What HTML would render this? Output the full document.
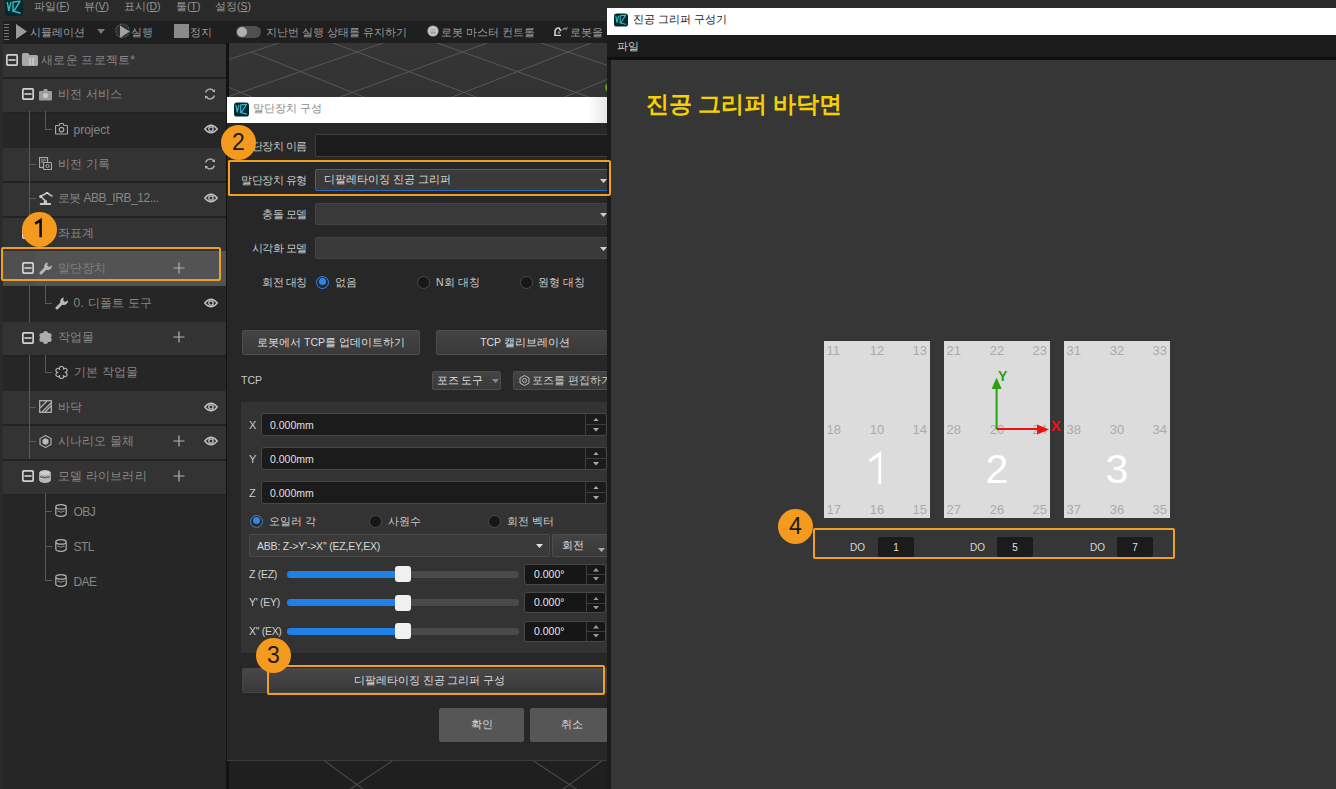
<!DOCTYPE html>
<html><head><meta charset="utf-8">
<style>
*{box-sizing:border-box}
html,body{margin:0;padding:0}
body{width:1336px;height:789px;overflow:hidden;position:relative;background:#2b2b2b;font-family:"Liberation Sans",sans-serif;color:#9a9a9a}
.a{position:absolute}
.t{position:absolute;white-space:nowrap;line-height:1}
.badge{position:absolute;width:35px;height:35px;border-radius:50%;background:#f39a1f;color:#1a1a1a;font-size:23px;text-align:center;line-height:35px}
.obox{position:absolute;border:2px solid #f0a020;border-radius:2px}
</style></head><body>

<!-- ===== MAIN WINDOW ===== -->
<div class="a" id="menubar" style="left:0;top:0;width:1336px;height:21px;background:#2a2a2a"></div>
<div class="a" id="toolbar" style="left:3px;top:21px;width:1333px;height:23px;background:#1f1f1f"></div>


<!-- menubar content -->
<svg class="a" style="left:5px;top:-1px" width="18" height="17" viewBox="0 0 18 17"><rect x="0" y="0" width="18" height="17" rx="3.5" fill="#04292d"/><path d="M2.3 3.4 L3.8 11.5 L5.8 3.6 M8 4 L8 12.3 M8 3 L15 2.3 L9 12 M7.5 12 L15 14" stroke="#33b8c8" stroke-width="1.45" fill="none" stroke-linecap="round" stroke-linejoin="round"/></svg>
<div class="t" style="left:34px;top:1.3px;font-size:10.5px;color:#959595">파일(<u>F</u>)</div>
<div class="t" style="left:84px;top:1.3px;font-size:10.5px;color:#959595">뷰(<u>V</u>)</div>
<div class="t" style="left:124px;top:1.3px;font-size:10.5px;color:#959595">표시(<u>D</u>)</div>
<div class="t" style="left:176px;top:1.3px;font-size:10.5px;color:#959595">툴(<u>T</u>)</div>
<div class="t" style="left:215px;top:1.3px;font-size:10.5px;color:#959595">설정(<u>S</u>)</div>
<!-- toolbar content -->
<div class="a" style="left:4px;top:24px;width:5px;height:17px;background:repeating-linear-gradient(#777 0 1px,transparent 1px 3px)"></div>
<svg class="a" style="left:15px;top:24px" width="13" height="15"><path d="M1 0 L12 7.5 L1 15Z" fill="#9a9a9a"/></svg>
<div class="t" style="left:30px;top:26.6px;font-size:10.7px">시뮬레이션</div>
<svg class="a" style="left:97px;top:29px" width="8" height="5"><path d="M0 0 L8 0 L4 5Z" fill="#777"/></svg>
<svg class="a" style="left:115px;top:23px" width="16" height="16"><circle cx="7.5" cy="7.8" r="6.8" fill="#2e2e2e" stroke="#5a5a5a" stroke-width="1.2" stroke-dasharray="2 1.2"/><path d="M5 2.6 L14.6 8.6 L5 15Z" fill="#a2a2a2"/></svg>
<div class="t" style="left:131px;top:26.6px;font-size:10.7px">실행</div>
<div class="a" style="left:174px;top:24px;width:15px;height:14px;background:#8a8a8a"></div>
<div class="t" style="left:190px;top:26.6px;font-size:10.7px">정지</div>
<div class="a" style="left:236px;top:26px;width:25px;height:12px;border-radius:6px;background:#505050"></div>
<div class="a" style="left:237px;top:27px;width:10px;height:10px;border-radius:5px;background:#b0b0b0"></div>
<div class="t" style="left:266px;top:26.6px;font-size:10.7px">지난번 실행 상태를 유지하기</div>
<svg class="a" style="left:426.5px;top:25px" width="12" height="12"><circle cx="6" cy="6" r="5.6" fill="#b5b5b5"/><circle cx="6" cy="6" r="3.6" fill="none" stroke="#d5d5d5" stroke-width="1"/><path d="M3.5 8 L8.5 8" stroke="#8a8a8a"/></svg>
<div class="t" style="left:441px;top:26.6px;font-size:10.7px">로봇 마스터 컨트롤</div>
<svg class="a" style="left:553px;top:26px" width="15" height="10"><path d="M1 9.5 L8 9.5 M2 9 L2 5 Q3 1.5 6 2 L8 5" stroke="#d0d0d0" stroke-width="1.6" fill="none"/><path d="M9.5 4 L11.5 2 L13 3.5 L14.5 1" stroke="#8a8a8a" stroke-width="1.1" fill="none"/><circle cx="6" cy="6.5" r="1.3" fill="#888"/></svg>
<div class="t" style="left:570px;top:26.6px;font-size:10.7px">로봇을 </div>

<!-- tree panel -->
<div class="a" id="tree" style="left:3px;top:44px;width:223px;height:745px;background:#262626"></div>
<div class="a" style="left:226px;top:43px;width:3px;height:746px;background:#121212"></div>
<div class="a" style="left:3px;top:44.0px;width:223px;height:33.2px;background:#333333"></div>
<div class="a" style="left:3px;top:77.2px;width:223px;height:1.5px;background:#222"></div>
<div class="a" style="left:3px;top:78.7px;width:223px;height:33.2px;background:#333333"></div>
<div class="a" style="left:3px;top:111.9px;width:223px;height:1.5px;background:#222"></div>
<div class="a" style="left:3px;top:148.2px;width:223px;height:33.2px;background:#333333"></div>
<div class="a" style="left:3px;top:181.4px;width:223px;height:1.5px;background:#222"></div>
<div class="a" style="left:3px;top:182.9px;width:223px;height:33.2px;background:#333333"></div>
<div class="a" style="left:3px;top:216.1px;width:223px;height:1.5px;background:#222"></div>
<div class="a" style="left:3px;top:217.6px;width:223px;height:33.2px;background:#333333"></div>
<div class="a" style="left:3px;top:250.8px;width:223px;height:1.5px;background:#222"></div>
<div class="a" style="left:3px;top:250.6px;width:223px;height:35.1px;background:#535353"></div>
<div class="a" style="left:3px;top:250.6px;width:32px;height:35.1px;background:#4f4f4f"></div>
<div class="a" style="left:3px;top:321.8px;width:223px;height:33.2px;background:#333333"></div>
<div class="a" style="left:3px;top:355.0px;width:223px;height:1.5px;background:#222"></div>
<div class="a" style="left:3px;top:391.2px;width:223px;height:33.2px;background:#333333"></div>
<div class="a" style="left:3px;top:424.4px;width:223px;height:1.5px;background:#222"></div>
<div class="a" style="left:3px;top:425.9px;width:223px;height:33.2px;background:#333333"></div>
<div class="a" style="left:3px;top:459.1px;width:223px;height:1.5px;background:#222"></div>
<div class="a" style="left:3px;top:460.6px;width:223px;height:33.2px;background:#333333"></div>
<div class="a" style="left:3px;top:493.8px;width:223px;height:1.5px;background:#222"></div>
<div class="a" style="left:29px;top:111.4px;width:1px;height:36.7px;background:#5a5a5a"></div>
<div class="a" style="left:29px;top:148.2px;width:1px;height:34.7px;background:#5a5a5a"></div>
<div class="a" style="left:29px;top:182.9px;width:1px;height:34.7px;background:#5a5a5a"></div>
<div class="a" style="left:29px;top:285.0px;width:1px;height:36.7px;background:#5a5a5a"></div>
<div class="a" style="left:29px;top:354.5px;width:1px;height:36.7px;background:#5a5a5a"></div>
<div class="a" style="left:29px;top:391.2px;width:1px;height:34.7px;background:#5a5a5a"></div>
<div class="a" style="left:29px;top:425.9px;width:1px;height:33.2px;background:#5a5a5a"></div>
<svg class="a" style="left:6px;top:53.7px" width="12" height="12"><rect x="0.85" y="0.85" width="10.3" height="10.3" rx="0.8" fill="none" stroke="#d2d2d2" stroke-width="1.7"/><rect x="2.4" y="5.2" width="7.2" height="1.6" fill="#d2d2d2"/></svg>
<svg class="a" style="left:22px;top:53.0px" width="16" height="13"><path d="M0 1.5 Q0 0 1.5 0 L6 0 L7.5 2 L14.5 2 Q16 2 16 3.5 L16 11.5 Q16 13 14.5 13 L1.5 13 Q0 13 0 11.5Z" fill="#a8a8a8"/><path d="M8 5 L8 12 M11 5 L11 12" stroke="#e0e0e0" stroke-width="1"/></svg>
<div class="t" style="left:41px;top:53.5px;font-size:12px;letter-spacing:0.25px;color:#878787">새로운 프로젝트*</div>
<svg class="a" style="left:22px;top:88.4px" width="12" height="12"><rect x="0.85" y="0.85" width="10.3" height="10.3" rx="0.8" fill="none" stroke="#d2d2d2" stroke-width="1.7"/><rect x="2.4" y="5.2" width="7.2" height="1.6" fill="#d2d2d2"/></svg>
<svg class="a" style="left:39px;top:87.7px" width="13" height="13"><path d="M1 3 L4 3 L5 1 L8 1 L9 3 L12 3 Q13 3 13 4 L13 11.5 Q13 12.5 12 12.5 L1 12.5 Q0 12.5 0 11.5 L0 4 Q0 3 1 3Z" fill="#9c9c9c"/><circle cx="6.5" cy="7.5" r="2.6" fill="#c8c8c8"/></svg>
<div class="t" style="left:57.5px;top:88.2px;font-size:12px;letter-spacing:0.25px;color:#878787">비전 서비스</div>
<svg class="a" style="left:204px;top:88.2px" width="12" height="12"><path d="M10 3.5 A4.5 4.5 0 0 0 1.6 4.5 M2 8.5 A4.5 4.5 0 0 0 10.4 7.5" fill="none" stroke="#b0b0b0" stroke-width="1.3"/><path d="M8 3.8 L11 4.2 L11 1Z M4 8.2 L1 7.8 L1 11Z" fill="#b0b0b0"/></svg>
<div class="a" style="left:45px;top:111.4px;width:1px;height:17.5px;background:#5a5a5a"></div>
<div class="a" style="left:45px;top:128.9px;width:7px;height:1px;background:#5a5a5a"></div>
<svg class="a" style="left:55px;top:122.4px" width="13" height="13"><path d="M1.5 3.5 L4 3.5 L5 1.5 L8 1.5 L9 3.5 L11.5 3.5 Q12.5 3.5 12.5 4.5 L12.5 11 Q12.5 12 11.5 12 L1.5 12 Q0.5 12 0.5 11 L0.5 4.5 Q0.5 3.5 1.5 3.5Z" fill="none" stroke="#a8a8a8" stroke-width="1.2"/><circle cx="6.5" cy="7.6" r="2.3" fill="none" stroke="#a8a8a8" stroke-width="1.2"/></svg>
<div class="t" style="left:73.5px;top:124.1px;font-size:12px;letter-spacing:0;color:#878787">project</div>
<svg class="a" style="left:204px;top:123.9px" width="14" height="10"><path d="M0.7 5 Q7 -2.5 13.3 5 Q7 12.5 0.7 5Z" fill="none" stroke="#c0c0c0" stroke-width="1.3"/><circle cx="7" cy="5" r="2.2" fill="none" stroke="#c0c0c0" stroke-width="1.3"/></svg>
<div class="a" style="left:29px;top:163.7px;width:7px;height:1px;background:#5a5a5a"></div>
<svg class="a" style="left:39px;top:157.2px" width="13" height="13"><rect x="0.5" y="0.5" width="8" height="10" fill="none" stroke="#aaa" stroke-width="1.2"/><path d="M2 3 L7 3 M2 5 L5 5" stroke="#aaa"/><rect x="4.5" y="5.5" width="8" height="7" rx="1" fill="#2e2e2e" stroke="#aaa" stroke-width="1.2"/><circle cx="8.5" cy="9" r="1.6" fill="none" stroke="#aaa"/></svg>
<div class="t" style="left:57.5px;top:157.7px;font-size:12px;letter-spacing:0.25px;color:#878787">비전 기록</div>
<svg class="a" style="left:204px;top:157.7px" width="12" height="12"><path d="M10 3.5 A4.5 4.5 0 0 0 1.6 4.5 M2 8.5 A4.5 4.5 0 0 0 10.4 7.5" fill="none" stroke="#b0b0b0" stroke-width="1.3"/><path d="M8 3.8 L11 4.2 L11 1Z M4 8.2 L1 7.8 L1 11Z" fill="#b0b0b0"/></svg>
<div class="a" style="left:29px;top:198.4px;width:7px;height:1px;background:#5a5a5a"></div>
<svg class="a" style="left:39px;top:191.9px" width="14" height="14" viewBox="0 0 14 14"><rect x="0.9" y="11" width="11" height="2" fill="#c8c8c8"/><path d="M4.5 11.2 L5 8.3 L7.7 8.3 L8.2 11.2Z" fill="#c8c8c8"/><path d="M6.2 8.6 L1.6 4.5 L8.1 0.8 L12.4 3.9" stroke="#c8c8c8" stroke-width="1.5" fill="none"/><circle cx="1.7" cy="4.5" r="1.5" fill="#d0d0d0"/><circle cx="8.1" cy="0.9" r="1.2" fill="#d0d0d0"/><path d="M11.5 3 L13.5 3.5 L12.5 5.2" stroke="#aaa" stroke-width="1" fill="none"/></svg>
<div class="t" style="left:57.5px;top:192.4px;font-size:12px;letter-spacing:-0.45px;color:#878787">로봇 ABB_IRB_12...</div>
<svg class="a" style="left:204px;top:193.4px" width="14" height="10"><path d="M0.7 5 Q7 -2.5 13.3 5 Q7 12.5 0.7 5Z" fill="none" stroke="#c0c0c0" stroke-width="1.3"/><circle cx="7" cy="5" r="2.2" fill="none" stroke="#c0c0c0" stroke-width="1.3"/></svg>
<svg class="a" style="left:22px;top:227.3px" width="12" height="12"><rect x="0.85" y="0.85" width="10.3" height="10.3" rx="0.8" fill="none" stroke="#d2d2d2" stroke-width="1.7"/><rect x="2.4" y="5.2" width="7.2" height="1.6" fill="#d2d2d2"/></svg>
<svg class="a" style="left:39px;top:226.6px" width="13" height="13"><path d="M2 1 L2 11 L12 11" stroke="#aaa" stroke-width="1.5" fill="none"/></svg>
<div class="t" style="left:57.5px;top:227.1px;font-size:12px;letter-spacing:0.25px;color:#878787">좌표계</div>
<svg class="a" style="left:22px;top:262.0px" width="12" height="12"><rect x="0.85" y="0.85" width="10.3" height="10.3" rx="0.8" fill="none" stroke="#d2d2d2" stroke-width="1.7"/><rect x="2.4" y="5.2" width="7.2" height="1.6" fill="#d2d2d2"/></svg>
<svg class="a" style="left:39px;top:260.8px" width="14" height="14" viewBox="0 0 14 14"><path d="M2 12 L7.2 6.8" stroke="#b8b8b8" stroke-width="3" stroke-linecap="round"/><path d="M6 8 A4.3 4.3 0 0 1 8.6 1.2 L8.3 4.6 L10 5.9 L13 4.3 A4.3 4.3 0 0 1 6 8Z" fill="#b8b8b8"/></svg>
<div class="t" style="left:57.5px;top:261.8px;font-size:12px;letter-spacing:0.25px;color:#808080">말단장치</div>
<svg class="a" style="left:173px;top:261.8px" width="12" height="12"><path d="M6 0.5 L6 11.5 M0.5 6 L11.5 6" stroke="#b0b0b0" stroke-width="1.2"/></svg>
<div class="a" style="left:45px;top:285.0px;width:1px;height:17.5px;background:#5a5a5a"></div>
<div class="a" style="left:45px;top:302.5px;width:7px;height:1px;background:#5a5a5a"></div>
<svg class="a" style="left:55px;top:295.5px" width="14" height="14" viewBox="0 0 14 14"><path d="M2 12 L7.2 6.8" stroke="#b8b8b8" stroke-width="3" stroke-linecap="round"/><path d="M6 8 A4.3 4.3 0 0 1 8.6 1.2 L8.3 4.6 L10 5.9 L13 4.3 A4.3 4.3 0 0 1 6 8Z" fill="#b8b8b8"/></svg>
<div class="t" style="left:73.5px;top:296.5px;font-size:12px;letter-spacing:0.25px;color:#878787">0. 디폴트 도구</div>
<svg class="a" style="left:204px;top:297.5px" width="14" height="10"><path d="M0.7 5 Q7 -2.5 13.3 5 Q7 12.5 0.7 5Z" fill="none" stroke="#c0c0c0" stroke-width="1.3"/><circle cx="7" cy="5" r="2.2" fill="none" stroke="#c0c0c0" stroke-width="1.3"/></svg>
<svg class="a" style="left:22px;top:331.5px" width="12" height="12"><rect x="0.85" y="0.85" width="10.3" height="10.3" rx="0.8" fill="none" stroke="#d2d2d2" stroke-width="1.7"/><rect x="2.4" y="5.2" width="7.2" height="1.6" fill="#d2d2d2"/></svg>
<svg class="a" style="left:39px;top:330.8px" width="13" height="13" viewBox="0 0 13 13"><g fill="#adadad"><circle cx="6.5" cy="6.5" r="4.3"/><circle cx="6.5" cy="2.6" r="2.5"/><circle cx="6.5" cy="10.4" r="2.5"/><circle cx="2.9" cy="4.6" r="2.5"/><circle cx="10.1" cy="4.6" r="2.5"/><circle cx="2.9" cy="8.4" r="2.5"/><circle cx="10.1" cy="8.4" r="2.5"/></g></svg>
<div class="t" style="left:57.5px;top:331.3px;font-size:12px;letter-spacing:0.25px;color:#878787">작업물</div>
<svg class="a" style="left:173px;top:331.3px" width="12" height="12"><path d="M6 0.5 L6 11.5 M0.5 6 L11.5 6" stroke="#b0b0b0" stroke-width="1.2"/></svg>
<div class="a" style="left:45px;top:354.5px;width:1px;height:17.5px;background:#5a5a5a"></div>
<div class="a" style="left:45px;top:372.0px;width:7px;height:1px;background:#5a5a5a"></div>
<svg class="a" style="left:55px;top:365.5px" width="13" height="13" viewBox="0 0 13 13"><path d="M4.85 3.64 A2.05 2.05 0 1 1 8.15 3.64 A2.05 2.05 0 1 1 9.80 6.50 A2.05 2.05 0 1 1 8.15 9.36 A2.05 2.05 0 1 1 4.85 9.36 A2.05 2.05 0 1 1 3.20 6.50 A2.05 2.05 0 1 1 4.85 3.64 Z" fill="none" stroke="#b0b0b0" stroke-width="1.2"/></svg>
<div class="t" style="left:73.5px;top:366.0px;font-size:12px;letter-spacing:0.25px;color:#878787">기본 작업물</div>
<div class="a" style="left:29px;top:406.7px;width:7px;height:1px;background:#5a5a5a"></div>
<svg class="a" style="left:39px;top:400.2px" width="13" height="13"><rect x="0.7" y="0.7" width="11.6" height="11.6" fill="none" stroke="#b0b0b0" stroke-width="1.3"/><path d="M1 8 L8 1 M3 12 L12 3 M6 12 L12 6" stroke="#b0b0b0" stroke-width="1.3"/></svg>
<div class="t" style="left:57.5px;top:400.7px;font-size:12px;letter-spacing:0.25px;color:#878787">바닥</div>
<svg class="a" style="left:204px;top:401.7px" width="14" height="10"><path d="M0.7 5 Q7 -2.5 13.3 5 Q7 12.5 0.7 5Z" fill="none" stroke="#c0c0c0" stroke-width="1.3"/><circle cx="7" cy="5" r="2.2" fill="none" stroke="#c0c0c0" stroke-width="1.3"/></svg>
<div class="a" style="left:29px;top:441.4px;width:7px;height:1px;background:#5a5a5a"></div>
<svg class="a" style="left:39px;top:434.9px" width="13" height="13"><path d="M6.5 0.5 L12 3.5 L12 9.5 L6.5 12.5 L1 9.5 L1 3.5Z" fill="none" stroke="#aaa" stroke-width="1.2"/><path d="M6.5 3 L9.5 4.8 L9.5 8.2 L6.5 10 L3.5 8.2 L3.5 4.8Z" fill="#bbb"/></svg>
<div class="t" style="left:57.5px;top:435.4px;font-size:12px;letter-spacing:0.25px;color:#878787">시나리오 물체</div>
<svg class="a" style="left:173px;top:435.4px" width="12" height="12"><path d="M6 0.5 L6 11.5 M0.5 6 L11.5 6" stroke="#b0b0b0" stroke-width="1.2"/></svg>
<svg class="a" style="left:204px;top:436.4px" width="14" height="10"><path d="M0.7 5 Q7 -2.5 13.3 5 Q7 12.5 0.7 5Z" fill="none" stroke="#c0c0c0" stroke-width="1.3"/><circle cx="7" cy="5" r="2.2" fill="none" stroke="#c0c0c0" stroke-width="1.3"/></svg>
<svg class="a" style="left:22px;top:470.3px" width="12" height="12"><rect x="0.85" y="0.85" width="10.3" height="10.3" rx="0.8" fill="none" stroke="#d2d2d2" stroke-width="1.7"/><rect x="2.4" y="5.2" width="7.2" height="1.6" fill="#d2d2d2"/></svg>
<svg class="a" style="left:39px;top:469.6px" width="12" height="13" viewBox="0 0 12 13"><path d="M0.6 2.8 A5.4 2.3 0 0 1 11.4 2.8 L11.4 10.2 A5.4 2.3 0 0 1 0.6 10.2Z" fill="#b5b5b5" stroke="#c8c8c8" stroke-width="0.8"/><ellipse cx="6" cy="2.8" rx="5" ry="1.9" fill="#d0d0d0"/><path d="M1.2 6.6 Q3 7.8 4.5 7 L6 8 L7.5 7 Q9 7.8 10.8 6.6" stroke="#3a3a3a" stroke-width="1" fill="none"/></svg>
<div class="t" style="left:57.5px;top:470.1px;font-size:12px;letter-spacing:0.25px;color:#878787">모델 라이브러리</div>
<svg class="a" style="left:173px;top:470.1px" width="12" height="12"><path d="M6 0.5 L6 11.5 M0.5 6 L11.5 6" stroke="#b0b0b0" stroke-width="1.2"/></svg>
<div class="a" style="left:45px;top:493.4px;width:1px;height:17.5px;background:#5a5a5a"></div>
<div class="a" style="left:45px;top:510.9px;width:7px;height:1px;background:#5a5a5a"></div>
<svg class="a" style="left:55px;top:504.4px" width="12" height="13" viewBox="0 0 12 13"><path d="M0.8 2.9 A5.2 2.2 0 0 1 11.2 2.9 A5.2 2.2 0 0 1 0.8 2.9 L0.8 10.1 A5.2 2.2 0 0 0 11.2 10.1 L11.2 2.9" fill="none" stroke="#b0b0b0" stroke-width="1.2"/><path d="M2.5 7 L4.5 7.6 L6 8.3 L7.5 7.6 L9.5 7" stroke="#9a9a9a" stroke-width="1" fill="none"/></svg>
<div class="t" style="left:73.5px;top:506.1px;font-size:12px;letter-spacing:-0.6px;color:#878787">OBJ</div>
<div class="a" style="left:45px;top:510.9px;width:1px;height:34.7px;background:#5a5a5a"></div>
<div class="a" style="left:45px;top:545.6px;width:7px;height:1px;background:#5a5a5a"></div>
<svg class="a" style="left:55px;top:539.1px" width="12" height="13" viewBox="0 0 12 13"><path d="M0.8 2.9 A5.2 2.2 0 0 1 11.2 2.9 A5.2 2.2 0 0 1 0.8 2.9 L0.8 10.1 A5.2 2.2 0 0 0 11.2 10.1 L11.2 2.9" fill="none" stroke="#b0b0b0" stroke-width="1.2"/><path d="M2.5 7 L4.5 7.6 L6 8.3 L7.5 7.6 L9.5 7" stroke="#9a9a9a" stroke-width="1" fill="none"/></svg>
<div class="t" style="left:73.5px;top:540.8px;font-size:12px;letter-spacing:-0.6px;color:#878787">STL</div>
<div class="a" style="left:45px;top:545.6px;width:1px;height:34.7px;background:#5a5a5a"></div>
<div class="a" style="left:45px;top:580.3px;width:7px;height:1px;background:#5a5a5a"></div>
<svg class="a" style="left:55px;top:573.8px" width="12" height="13" viewBox="0 0 12 13"><path d="M0.8 2.9 A5.2 2.2 0 0 1 11.2 2.9 A5.2 2.2 0 0 1 0.8 2.9 L0.8 10.1 A5.2 2.2 0 0 0 11.2 10.1 L11.2 2.9" fill="none" stroke="#b0b0b0" stroke-width="1.2"/><path d="M2.5 7 L4.5 7.6 L6 8.3 L7.5 7.6 L9.5 7" stroke="#9a9a9a" stroke-width="1" fill="none"/></svg>
<div class="t" style="left:73.5px;top:575.5px;font-size:12px;letter-spacing:-0.6px;color:#878787">DAE</div>
<div class="obox" style="left:1px;top:246.8px;width:220px;height:34.1px"></div>
<div class="badge" style="left:22px;top:212px"><svg class="a" style="left:0;top:0" width="35" height="35"><path d="M13.2 11.6 L18.6 8.2 L18.6 25.2" stroke="#111" stroke-width="2.6" fill="none" stroke-linejoin="miter"/></svg></div>
<!-- viewport -->
<div class="a" id="viewport" style="left:229px;top:43px;width:378px;height:746px;background:linear-gradient(#353535,#323232 8%,#262626 55%,#1f1f1f 95%)"></div>
<svg class="a" style="left:229px;top:43px" width="378" height="746"><g stroke="#575757" stroke-width="1"><line x1="-339.0" y1="-13.0" x2="-175.4" y2="67.0"/><line x1="-115.3" y1="-13.0" x2="-381.6" y2="67.0"/><line x1="-236.8" y1="-13.0" x2="-61.2" y2="67.0"/><line x1="-13.1" y1="-13.0" x2="-267.3" y2="67.0"/><line x1="-134.6" y1="-13.0" x2="53.1" y2="67.0"/><line x1="89.1" y1="-13.0" x2="-153.1" y2="67.0"/><line x1="22.5" y1="9.0" x2="167.4" y2="67.0"/><line x1="191.3" y1="-13.0" x2="-38.8" y2="67.0"/><line x1="69.7" y1="-13.0" x2="281.6" y2="67.0"/><line x1="293.5" y1="-13.0" x2="75.4" y2="67.0"/><line x1="171.9" y1="-13.0" x2="395.9" y2="67.0"/><line x1="395.6" y1="-13.0" x2="189.7" y2="67.0"/><line x1="274.1" y1="-13.0" x2="510.1" y2="67.0"/><line x1="497.8" y1="-13.0" x2="304.0" y2="67.0"/><line x1="376.3" y1="-13.0" x2="624.4" y2="67.0"/><line x1="600.0" y1="-13.0" x2="418.2" y2="67.0"/><line x1="478.4" y1="-13.0" x2="738.6" y2="67.0"/><line x1="702.2" y1="-13.0" x2="532.5" y2="67.0"/></g><g stroke="#4a4a4a" stroke-width="1.1"><line x1="66.9" y1="697" x2="149.1" y2="757"/><line x1="194.5" y1="697" x2="104.9" y2="757"/><line x1="272.6" y1="697" x2="364.0" y2="757"/><line x1="401.5" y1="697" x2="319.3" y2="757"/></g><circle cx="381" cy="44.5" r="5" fill="#6a9a20"/></svg>
<!-- dialog -->
<div class="a" style="left:227px;top:97px;width:380px;height:664px;background:#272727;border-bottom:1px solid #3c3c3c"></div>
<div class="a" style="left:227px;top:97px;width:380px;height:26px;background:linear-gradient(90deg,#fff 95%,#e6e6e6)"></div>
<svg class="a" style="left:234px;top:102px" width="15" height="15" viewBox="0 0 18 17"><rect x="0" y="0" width="18" height="17" rx="3.5" fill="#04292d"/><path d="M2.3 3.4 L3.8 11.5 L5.8 3.6 M8 4 L8 12.3 M8 3 L15 2.3 L9 12 M7.5 12 L15 14" stroke="#33b8c8" stroke-width="1.45" fill="none" stroke-linecap="round" stroke-linejoin="round"/></svg>
<div class="t" style="left:253px;top:103px;font-size:10.5px;color:#8a8a8a">말단장치 구성</div>
<div class="t" style="right:1029px;top:140.7px;font-size:10.5px;color:#c8c8c8;letter-spacing:-0.45px">말단장치 이름</div>
<div class="a" style="left:315px;top:134px;width:300px;height:23px;background:#1b1b1b;border:1px solid #3e3e3e;border-radius:2px"></div>
<div class="t" style="right:1029px;top:174.7px;font-size:10.5px;color:#c8c8c8;letter-spacing:-0.45px">말단장치 유형</div>
<div class="a" style="left:315px;top:169px;width:300px;height:22px;background:#3a3a3a;border:1px solid #2b66b8;border-radius:2px"></div>
<div class="t" style="left:324px;top:174px;font-size:10.5px;color:#c8c8c8;color:#d8d8d8">디팔레타이징 진공 그리퍼</div>
<svg class="a" style="left:599.5px;top:178.5px" width="7" height="4"><path d="M0 0 L7 0 L3.5 4Z" fill="#d0d0d0"/></svg>
<div class="t" style="right:1029px;top:208.7px;font-size:10.5px;color:#c8c8c8;letter-spacing:-0.45px">충돌 모델</div>
<div class="a" style="left:315px;top:203px;width:300px;height:22px;background:#393939;border:1px solid #444;border-radius:2px"></div>
<svg class="a" style="left:599.5px;top:212.5px" width="7" height="4"><path d="M0 0 L7 0 L3.5 4Z" fill="#d0d0d0"/></svg>
<div class="t" style="right:1029px;top:242.7px;font-size:10.5px;color:#c8c8c8;letter-spacing:-0.45px">시각화 모델</div>
<div class="a" style="left:315px;top:237px;width:300px;height:22px;background:#393939;border:1px solid #444;border-radius:2px"></div>
<svg class="a" style="left:599.5px;top:246.5px" width="7" height="4"><path d="M0 0 L7 0 L3.5 4Z" fill="#d0d0d0"/></svg>
<div class="t" style="right:1029px;top:276.7px;font-size:10.5px;color:#c8c8c8;letter-spacing:-0.45px">회전 대칭</div>
<div class="a" style="left:316px;top:275.5px;width:13px;height:13px;border-radius:50%;border:1.5px solid #2f86e8;background:#2a2a2a"><div class="a" style="left:1.5px;top:1.5px;width:7px;height:7px;border-radius:50%;background:#2f86e8"></div></div>
<div class="t" style="left:335px;top:276.7px;font-size:10.5px;color:#c8c8c8">없음</div>
<div class="a" style="left:417px;top:275.5px;width:13px;height:13px;border-radius:50%;border:1px solid #4a4a4a;background:#171717"></div>
<div class="t" style="left:436px;top:276.7px;font-size:10.5px;color:#c8c8c8">N회 대칭</div>
<div class="a" style="left:520px;top:275.5px;width:13px;height:13px;border-radius:50%;border:1px solid #4a4a4a;background:#171717"></div>
<div class="t" style="left:538px;top:276.7px;font-size:10.5px;color:#c8c8c8">원형 대칭</div>
<div class="a" style="left:242px;top:330px;width:178px;height:25px;background:linear-gradient(#434343,#393939);border:1px solid #4d4d4d;border-radius:2px"></div>
<div class="t" style="left:181.0px;width:300px;text-align:center;top:336.5px;font-size:10.5px;color:#dedede">로봇에서 TCP를 업데이트하기</div>
<div class="a" style="left:436px;top:330px;width:180px;height:25px;background:linear-gradient(#434343,#393939);border:1px solid #4d4d4d;border-radius:2px"></div>
<div class="t" style="left:375.0px;width:300px;text-align:center;top:336.5px;font-size:10.5px;color:#dedede">TCP 캘리브레이션</div>
<div class="t" style="left:241px;top:375px;font-size:10.5px;color:#c8c8c8">TCP</div>
<div class="a" style="left:432px;top:371px;width:69px;height:19px;background:linear-gradient(#434343,#393939);border:1px solid #4d4d4d;border-radius:2px"></div>
<div class="t" style="left:310.0px;width:300px;text-align:center;top:374.5px;font-size:10.5px;color:#dedede">포즈 도구</div>
<svg class="a" style="left:491.5px;top:378.5px" width="7" height="4"><path d="M0 0 L7 0 L3.5 4Z" fill="#888"/></svg>
<div class="a" style="left:513px;top:371px;width:100px;height:19px;background:linear-gradient(#434343,#393939);border:1px solid #4d4d4d;border-radius:2px"></div>
<svg class="a" style="left:519px;top:375px" width="11" height="11"><path d="M5.5 0.5 L10 3 L10 8 L5.5 10.5 L1 8 L1 3Z" fill="none" stroke="#bbb" stroke-width="1"/><circle cx="5.5" cy="5.5" r="2" fill="none" stroke="#bbb"/></svg>
<div class="t" style="left:532px;top:375px;font-size:10.5px;color:#c8c8c8">포즈를 편집하기</div>
<div class="a" style="left:241px;top:402px;width:370px;height:251px;background:#333333"></div>
<div class="t" style="left:249px;top:419.5px;font-size:11px;color:#c8c8c8">X</div>
<div class="a" style="left:261px;top:413px;width:346px;height:23px;background:#1b1b1b;border:1px solid #474747;border-radius:3px"></div>
<div class="a" style="left:585px;top:414px;width:1px;height:21px;background:#3c3c3c"></div>
<div class="a" style="left:586px;top:424px;width:21px;height:1px;background:#3c3c3c"></div>
<svg class="a" style="left:592.5px;top:417.5px" width="6" height="3.5"><path d="M0 3.5 L6 3.5 L3 0Z" fill="#aaa"/></svg>
<svg class="a" style="left:592.5px;top:428px" width="6" height="3.5"><path d="M0 0 L6 0 L3 3.5Z" fill="#aaa"/></svg>
<div class="t" style="left:270px;top:420px;font-size:10.5px;color:#e0e0e0">0.000mm</div>
<div class="t" style="left:249px;top:453.5px;font-size:11px;color:#c8c8c8">Y</div>
<div class="a" style="left:261px;top:447px;width:346px;height:23px;background:#1b1b1b;border:1px solid #474747;border-radius:3px"></div>
<div class="a" style="left:585px;top:448px;width:1px;height:21px;background:#3c3c3c"></div>
<div class="a" style="left:586px;top:458px;width:21px;height:1px;background:#3c3c3c"></div>
<svg class="a" style="left:592.5px;top:451.5px" width="6" height="3.5"><path d="M0 3.5 L6 3.5 L3 0Z" fill="#aaa"/></svg>
<svg class="a" style="left:592.5px;top:462px" width="6" height="3.5"><path d="M0 0 L6 0 L3 3.5Z" fill="#aaa"/></svg>
<div class="t" style="left:270px;top:454px;font-size:10.5px;color:#e0e0e0">0.000mm</div>
<div class="t" style="left:249px;top:487.5px;font-size:11px;color:#c8c8c8">Z</div>
<div class="a" style="left:261px;top:481px;width:346px;height:23px;background:#1b1b1b;border:1px solid #474747;border-radius:3px"></div>
<div class="a" style="left:585px;top:482px;width:1px;height:21px;background:#3c3c3c"></div>
<div class="a" style="left:586px;top:492px;width:21px;height:1px;background:#3c3c3c"></div>
<svg class="a" style="left:592.5px;top:485.5px" width="6" height="3.5"><path d="M0 3.5 L6 3.5 L3 0Z" fill="#aaa"/></svg>
<svg class="a" style="left:592.5px;top:496px" width="6" height="3.5"><path d="M0 0 L6 0 L3 3.5Z" fill="#aaa"/></svg>
<div class="t" style="left:270px;top:488px;font-size:10.5px;color:#e0e0e0">0.000mm</div>
<div class="a" style="left:250px;top:514.5px;width:13px;height:13px;border-radius:50%;border:1.5px solid #2f86e8;background:#2a2a2a"><div class="a" style="left:1.5px;top:1.5px;width:7px;height:7px;border-radius:50%;background:#2f86e8"></div></div>
<div class="t" style="left:269px;top:515.7px;font-size:10.5px;color:#c8c8c8">오일러 각</div>
<div class="a" style="left:369px;top:514.5px;width:13px;height:13px;border-radius:50%;border:1px solid #4a4a4a;background:#171717"></div>
<div class="t" style="left:388px;top:515.7px;font-size:10.5px;color:#c8c8c8">사원수</div>
<div class="a" style="left:488px;top:514.5px;width:13px;height:13px;border-radius:50%;border:1px solid #4a4a4a;background:#171717"></div>
<div class="t" style="left:507px;top:515.7px;font-size:10.5px;color:#c8c8c8">회전 벡터</div>
<div class="a" style="left:249px;top:534px;width:301px;height:23px;background:#3a3a3a;border:1px solid #4a4a4a;border-radius:2px"></div>
<div class="t" style="left:257px;top:540.8px;font-size:10.5px;color:#d8d8d8;letter-spacing:-0.2px">ABB: Z-&gt;Y'-&gt;X'' (EZ,EY,EX)</div>
<svg class="a" style="left:535.5px;top:543.5px" width="7" height="4"><path d="M0 0 L7 0 L3.5 4Z" fill="#e0e0e0"/></svg>
<div class="a" style="left:552px;top:534px;width:60px;height:23px;background:linear-gradient(#434343,#393939);border:1px solid #4d4d4d;border-radius:2px"></div>
<div class="t" style="left:423.0px;width:300px;text-align:center;top:539.5px;font-size:10.5px;color:#dedede">회전</div>
<svg class="a" style="left:597.5px;top:547.5px" width="7" height="4"><path d="M0 0 L7 0 L3.5 4Z" fill="#aaa"/></svg>
<div class="t" style="left:249px;top:568.8px;font-size:10.5px;color:#d0d0d0;letter-spacing:-0.3px">Z (EZ)</div>
<div class="a" style="left:287px;top:570.5px;width:232px;height:7px;border-radius:3.5px;background:#4a4a4a"></div>
<div class="a" style="left:287px;top:570.5px;width:115px;height:7px;border-radius:3.5px;background:#1f80e6"></div>
<div class="a" style="left:395px;top:566px;width:16px;height:16px;border-radius:3px;background:#f0f0f0"></div>
<div class="a" style="left:524px;top:563.5px;width:82px;height:21px;background:#161616;border:1px solid #474747;border-radius:3px"></div>
<div class="a" style="left:586px;top:564px;width:1px;height:20px;background:#3c3c3c"></div>
<div class="a" style="left:587px;top:574px;width:20px;height:1px;background:#3c3c3c"></div>
<svg class="a" style="left:592.5px;top:568px" width="6" height="3.5"><path d="M0 3.5 L6 3.5 L3 0Z" fill="#999"/></svg>
<svg class="a" style="left:592.5px;top:577px" width="6" height="3.5"><path d="M0 0 L6 0 L3 3.5Z" fill="#999"/></svg>
<div class="t" style="left:534px;top:568.8px;font-size:10.5px;color:#e8e8e8">0.000°</div>
<div class="t" style="left:249px;top:597.3px;font-size:10.5px;color:#d0d0d0;letter-spacing:-0.3px">Y' (EY)</div>
<div class="a" style="left:287px;top:599.0px;width:232px;height:7px;border-radius:3.5px;background:#4a4a4a"></div>
<div class="a" style="left:287px;top:599.0px;width:115px;height:7px;border-radius:3.5px;background:#1f80e6"></div>
<div class="a" style="left:395px;top:594.5px;width:16px;height:16px;border-radius:3px;background:#f0f0f0"></div>
<div class="a" style="left:524px;top:592.0px;width:82px;height:21px;background:#161616;border:1px solid #474747;border-radius:3px"></div>
<div class="a" style="left:586px;top:592.5px;width:1px;height:20px;background:#3c3c3c"></div>
<div class="a" style="left:587px;top:602.5px;width:20px;height:1px;background:#3c3c3c"></div>
<svg class="a" style="left:592.5px;top:596.5px" width="6" height="3.5"><path d="M0 3.5 L6 3.5 L3 0Z" fill="#999"/></svg>
<svg class="a" style="left:592.5px;top:605.5px" width="6" height="3.5"><path d="M0 0 L6 0 L3 3.5Z" fill="#999"/></svg>
<div class="t" style="left:534px;top:597.3px;font-size:10.5px;color:#e8e8e8">0.000°</div>
<div class="t" style="left:249px;top:625.8px;font-size:10.5px;color:#d0d0d0;letter-spacing:-0.3px">X'' (EX)</div>
<div class="a" style="left:287px;top:627.5px;width:232px;height:7px;border-radius:3.5px;background:#4a4a4a"></div>
<div class="a" style="left:287px;top:627.5px;width:115px;height:7px;border-radius:3.5px;background:#1f80e6"></div>
<div class="a" style="left:395px;top:623px;width:16px;height:16px;border-radius:3px;background:#f0f0f0"></div>
<div class="a" style="left:524px;top:620.5px;width:82px;height:21px;background:#161616;border:1px solid #474747;border-radius:3px"></div>
<div class="a" style="left:586px;top:621px;width:1px;height:20px;background:#3c3c3c"></div>
<div class="a" style="left:587px;top:631px;width:20px;height:1px;background:#3c3c3c"></div>
<svg class="a" style="left:592.5px;top:625px" width="6" height="3.5"><path d="M0 3.5 L6 3.5 L3 0Z" fill="#999"/></svg>
<svg class="a" style="left:592.5px;top:634px" width="6" height="3.5"><path d="M0 0 L6 0 L3 3.5Z" fill="#999"/></svg>
<div class="t" style="left:534px;top:625.8px;font-size:10.5px;color:#e8e8e8">0.000°</div>
<div class="a" style="left:242px;top:668px;width:370px;height:25px;background:linear-gradient(#484848,#383838);border:1px solid #454545;border-radius:2px"></div>
<div class="obox" style="left:267px;top:665px;width:338px;height:29.5px"></div>
<div class="t" style="left:279.5px;width:300px;text-align:center;top:675px;font-size:10.5px;color:#dcdcdc">디팔레타이징 진공 그리퍼 구성</div>
<div class="a" style="left:439px;top:708px;width:85px;height:34px;background:#565656;border:1px solid #565656;border-radius:2px"></div>
<div class="t" style="left:331.5px;width:300px;text-align:center;top:719.0px;font-size:10.5px;color:#dadada">확인</div>
<div class="a" style="left:530px;top:708px;width:85px;height:34px;background:#565656;border:1px solid #565656;border-radius:2px"></div>
<div class="t" style="left:422.0px;width:300px;text-align:center;top:719.0px;font-size:10.5px;color:#dadada">취소</div>
<div class="obox" style="left:228px;top:160px;width:383px;height:36px"></div>
<div class="badge" style="left:221px;top:125px">2</div>
<div class="badge" style="left:256px;top:638px">3</div>

<!-- ===== RIGHT WINDOW ===== -->
<div class="a" style="left:607px;top:8px;width:729px;height:781px;background:#1b1b1b"></div>
<div class="a" style="left:607px;top:8px;width:729px;height:26.5px;background:#fff"></div>
<svg class="a" style="left:614px;top:13px" width="14" height="14" viewBox="0 0 18 17"><rect x="0" y="0" width="18" height="17" rx="3.5" fill="#04292d"/><path d="M2.3 3.4 L3.8 11.5 L5.8 3.6 M8 4 L8 12.3 M8 3 L15 2.3 L9 12 M7.5 12 L15 14" stroke="#33b8c8" stroke-width="1.45" fill="none" stroke-linecap="round" stroke-linejoin="round"/></svg>
<div class="t" style="left:633px;top:14px;font-size:10.7px;color:#222">진공 그리퍼 구성기</div>
<div class="t" style="left:617px;top:41px;font-size:10.5px;color:#d0d0d0">파일</div>
<div class="a" style="left:607px;top:57px;width:729px;height:3px;background:#101010"></div>
<div class="a" style="left:611px;top:60px;width:725px;height:729px;background:#363636"></div>
<div class="t" style="left:645.5px;top:93px;font-size:23.3px;font-weight:bold;color:#f7d000">진공 그리퍼 바닥면</div>
<div class="a" style="left:824px;top:341px;width:106px;height:177px;background:#dcdcdc"></div>
<div class="t" style="left:826.5px;top:344.4px;font-size:13px;color:#ababab">11</div>
<div class="t" style="left:857px;width:40px;text-align:center;top:344.4px;font-size:13px;color:#ababab">12</div>
<div class="t" style="right:409px;top:344.4px;font-size:13px;color:#ababab">13</div>
<div class="t" style="left:826.5px;top:423.4px;font-size:13px;color:#ababab">18</div>
<div class="t" style="left:857px;width:40px;text-align:center;top:423.4px;font-size:13px;color:#ababab">10</div>
<div class="t" style="right:409px;top:423.4px;font-size:13px;color:#ababab">14</div>
<div class="t" style="left:826.5px;top:503.4px;font-size:13px;color:#ababab">17</div>
<div class="t" style="left:857px;width:40px;text-align:center;top:503.4px;font-size:13px;color:#ababab">16</div>
<div class="t" style="right:409px;top:503.4px;font-size:13px;color:#ababab">15</div>
<svg class="a" style="left:866px;top:450px" width="20" height="36"><path d="M3.5 11 L13.8 3.8 L13.8 34" stroke="#fff" stroke-width="2.8" fill="none" stroke-linejoin="miter"/></svg>
<div class="a" style="left:944px;top:341px;width:106px;height:177px;background:#dcdcdc"></div>
<div class="t" style="left:946.5px;top:344.4px;font-size:13px;color:#ababab">21</div>
<div class="t" style="left:977px;width:40px;text-align:center;top:344.4px;font-size:13px;color:#ababab">22</div>
<div class="t" style="right:289px;top:344.4px;font-size:13px;color:#ababab">23</div>
<div class="t" style="left:946.5px;top:423.4px;font-size:13px;color:#ababab">28</div>
<div class="t" style="left:977px;width:40px;text-align:center;top:423.4px;font-size:13px;color:#ababab">20</div>
<div class="t" style="right:289px;top:423.4px;font-size:13px;color:#ababab">24</div>
<div class="t" style="left:946.5px;top:503.4px;font-size:13px;color:#ababab">27</div>
<div class="t" style="left:977px;width:40px;text-align:center;top:503.4px;font-size:13px;color:#ababab">26</div>
<div class="t" style="right:289px;top:503.4px;font-size:13px;color:#ababab">25</div>
<div class="t" style="left:967px;width:60px;text-align:center;top:449px;font-size:41px;color:#ffffff">2</div>
<div class="a" style="left:1064px;top:341px;width:106px;height:177px;background:#dcdcdc"></div>
<div class="t" style="left:1066.5px;top:344.4px;font-size:13px;color:#ababab">31</div>
<div class="t" style="left:1097px;width:40px;text-align:center;top:344.4px;font-size:13px;color:#ababab">32</div>
<div class="t" style="right:169px;top:344.4px;font-size:13px;color:#ababab">33</div>
<div class="t" style="left:1066.5px;top:423.4px;font-size:13px;color:#ababab">38</div>
<div class="t" style="left:1097px;width:40px;text-align:center;top:423.4px;font-size:13px;color:#ababab">30</div>
<div class="t" style="right:169px;top:423.4px;font-size:13px;color:#ababab">34</div>
<div class="t" style="left:1066.5px;top:503.4px;font-size:13px;color:#ababab">37</div>
<div class="t" style="left:1097px;width:40px;text-align:center;top:503.4px;font-size:13px;color:#ababab">36</div>
<div class="t" style="right:169px;top:503.4px;font-size:13px;color:#ababab">35</div>
<div class="t" style="left:1087px;width:60px;text-align:center;top:449px;font-size:41px;color:#ffffff">3</div>
<svg class="a" style="left:985px;top:365px" width="80" height="75"><path d="M11.6 64 L11.6 20" stroke="#2aa012" stroke-width="2"/><path d="M6.6 24 L11.6 12.5 L16.6 24Z" fill="#2aa012"/><path d="M11.6 64 L56 64" stroke="#f01010" stroke-width="2"/><path d="M52 59.5 L64 64.5 L52 69.5Z" fill="#f01010"/></svg>
<div class="t" style="left:998px;top:369px;font-size:14px;font-weight:bold;color:#2aa012">Y</div>
<div class="t" style="left:1051px;top:419px;font-size:14.5px;font-weight:bold;color:#f01010">X</div>
<div class="obox" style="left:813px;top:528px;width:362px;height:30.7px"></div>
<div class="t" style="left:842.5px;width:30px;text-align:center;top:543px;font-size:10px;color:#d8d8d8">DO</div>
<div class="a" style="left:878px;top:537px;width:36px;height:20px;background:#1b1b1b;border-radius:2px"></div>
<div class="t" style="left:878px;width:36px;text-align:center;top:543px;font-size:10px;color:#e0e0e0">1</div>
<div class="t" style="left:962.5px;width:30px;text-align:center;top:543px;font-size:10px;color:#d8d8d8">DO</div>
<div class="a" style="left:997px;top:537px;width:36px;height:20px;background:#1b1b1b;border-radius:2px"></div>
<div class="t" style="left:997px;width:36px;text-align:center;top:543px;font-size:10px;color:#e0e0e0">5</div>
<div class="t" style="left:1082.5px;width:30px;text-align:center;top:543px;font-size:10px;color:#d8d8d8">DO</div>
<div class="a" style="left:1117px;top:537px;width:36px;height:20px;background:#1b1b1b;border-radius:2px"></div>
<div class="t" style="left:1117px;width:36px;text-align:center;top:543px;font-size:10px;color:#e0e0e0">7</div>
<div class="badge" style="left:778px;top:509px">4</div>
<div class="obox" style="left:228px;top:160px;width:383px;height:36px"></div>
</body></html>
